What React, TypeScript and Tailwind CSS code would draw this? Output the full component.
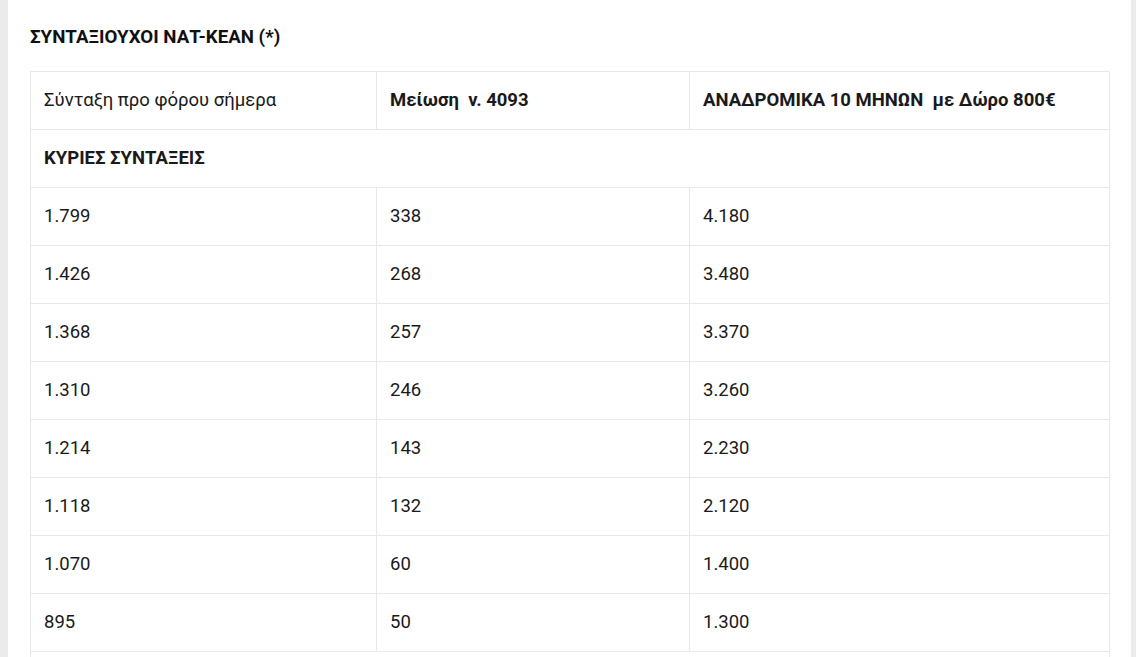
import React from "react";

const rows: [string, string, string][] = [
  ["1.799", "338", "4.180"],
  ["1.426", "268", "3.480"],
  ["1.368", "257", "3.370"],
  ["1.310", "246", "3.260"],
  ["1.214", "143", "2.230"],
  ["1.118", "132", "2.120"],
  ["1.070", "60", "1.400"],
  ["895", "50", "1.300"],
];

export default function App() {
  return (
    <div
      className="min-h-screen bg-[#ebebeb] pl-[8px] pr-[5px]"
      style={{ fontFamily: "Roboto, 'Noto Sans', sans-serif" }}
    >
      <div className="min-h-screen bg-white px-[22px] pt-[26px]">
        <h2 className="text-[18.7px] font-bold leading-[22px] text-[#111] mb-[23px]">
          ΣΥΝΤΑΞΙΟΥΧΟΙ ΝΑΤ-ΚΕΑΝ (*)
        </h2>
        <table className="w-[1080px] border-collapse text-[18.5px] text-[#1a1a1a]">
          <colgroup>
            <col className="w-[346px]" />
            <col className="w-[313px]" />
            <col />
          </colgroup>
          <tbody>
            <tr className="h-[58px]">
              <td className="border border-[#e8e8e8] px-[13px] align-middle">
                Σύνταξη προ φόρου σήμερα
              </td>
              <td className="border border-[#e8e8e8] px-[13px] align-middle font-bold">
                Μείωση&nbsp; ν. 4093
              </td>
              <td className="border border-[#e8e8e8] px-[13px] align-middle font-bold">
                ΑΝΑΔΡΟΜΙΚΑ 10 ΜΗΝΩΝ&nbsp; με Δώρο 800€
              </td>
            </tr>
            <tr className="h-[58px]">
              <td
                colSpan={3}
                className="border border-[#e8e8e8] px-[13px] align-middle font-bold"
              >
                ΚΥΡΙΕΣ ΣΥΝΤΑΞΕΙΣ
              </td>
            </tr>
            {rows.map((r, i) => (
              <tr key={i} className="h-[58px]">
                <td className="border border-[#e8e8e8] px-[13px] align-middle">{r[0]}</td>
                <td className="border border-[#e8e8e8] px-[13px] align-middle">{r[1]}</td>
                <td className="border border-[#e8e8e8] px-[13px] align-middle">{r[2]}</td>
              </tr>
            ))}
            <tr className="h-[58px]">
              <td
                colSpan={3}
                className="border border-[#e8e8e8] px-[13px] align-middle font-bold"
              >
                &nbsp;
              </td>
            </tr>
          </tbody>
        </table>
      </div>
    </div>
  );
}
